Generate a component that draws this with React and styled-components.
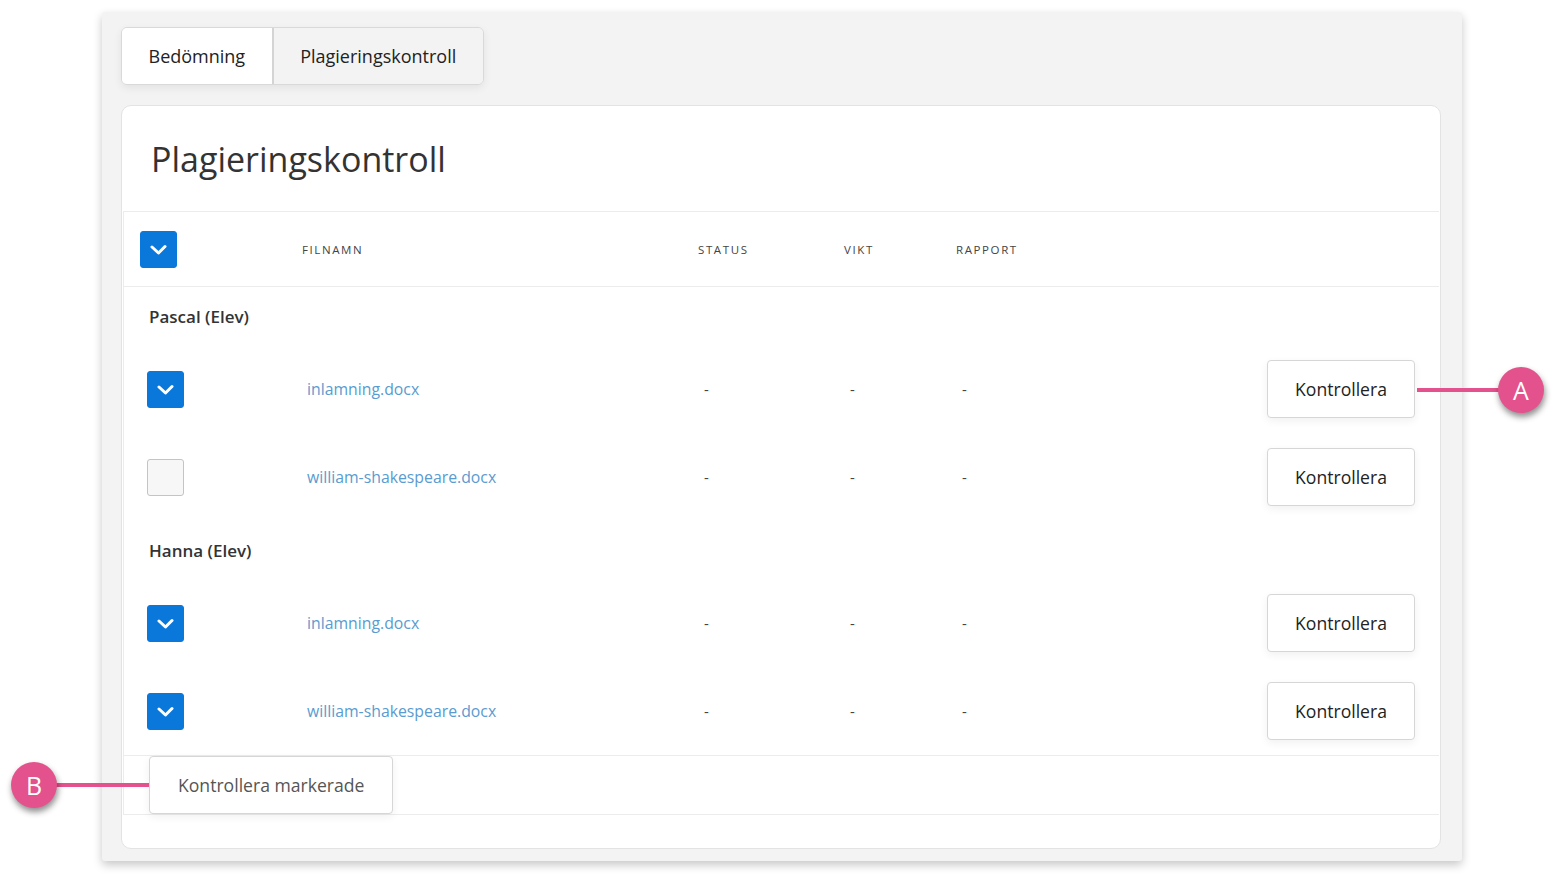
import React from 'react';
import styled, { createGlobalStyle } from 'styled-components';

const GlobalStyle = createGlobalStyle`
  body {
    margin: 0;
    background: #ffffff;
    font-family: 'Open Sans', 'Noto Sans', sans-serif;
    color: #333333;
  }
`;

const Page = styled.div`
  position: relative;
  width: 1555px;
  height: 894px;
  padding: 12px 0 0 102px;
  box-sizing: border-box;
`;

const Frame = styled.div`
  width: 1360px;
  height: 849px;
  box-sizing: border-box;
  background: #f3f3f3;
  border-radius: 3px;
  padding: 15px 21px 0 19px;
  box-shadow: 0 4px 10px rgba(0, 0, 0, 0.22);
`;

const Tabs = styled.div`
  display: inline-flex;
  border: 1px solid #d9d9d9;
  border-radius: 6px;
  overflow: hidden;
  box-shadow: 0 3px 8px rgba(0, 0, 0, 0.07);
`;

const Tab = styled.div`
  height: 56px;
  padding: 0 26.5px;
  display: flex;
  align-items: center;
  font-size: 18px;
  color: #222;
  background: ${p => (p.$active ? '#ffffff' : '#f3f3f3')};
  & + & {
    border-left: 2px solid #d4d4d4;
  }
`;

const Card = styled.div`
  margin-top: 20px;
  background: #ffffff;
  border: 1px solid #e3e3e3;
  border-radius: 10px;
  padding: 0 1px 33px;
`;

const Title = styled.h1`
  margin: 0;
  height: 105px;
  display: flex;
  align-items: center;
  padding-left: 28px;
  font-size: 34px;
  font-weight: 400;
  color: #333;
`;

const Table = styled.div`
  border: 1px solid #ececec;
  border-right: none;
`;

const columns = '162px 396px 146px 112px 1fr 148px';

const HeaderRow = styled.div`
  display: grid;
  grid-template-columns: ${columns};
  align-items: center;
  height: 74px;
  padding: 0 24px 0 16px;
  border-bottom: 1px solid #ececec;
`;

const HeadCell = styled.div`
  font-size: 11.5px;
  letter-spacing: 1.6px;
  color: #444;
  text-transform: uppercase;
`;

const GroupLabel = styled.div`
  height: 58px;
  display: flex;
  align-items: center;
  padding-left: 25px;
  font-size: 17px;
  font-weight: 600;
  color: #333;
`;

const Row = styled.div`
  display: grid;
  grid-template-columns: ${columns};
  align-items: center;
  padding: 15px 24px 15px 23px;
`;

const Box = styled.div`
  width: 37px;
  height: 37px;
  box-sizing: border-box;
  border-radius: 3px;
  display: flex;
  align-items: center;
  justify-content: center;
  background: ${p => (p.$checked ? '#0a78db' : '#f7f7f7')};
  border: 1px solid ${p => (p.$checked ? '#0a78db' : '#c4c4c4')};
`;

const FileLink = styled.a`
  font-size: 15.8px;
  color: #5a9bd0;
  text-decoration: none;
  margin-left: -2px;
`;

const Dash = styled.div`
  font-size: 15px;
  color: #444;
  margin-left: -1px;
`;

const Button = styled.button`
  height: 58px;
  box-sizing: border-box;
  padding: 0 ${p => (p.$muted ? 28 : 0)}px;
  background: #ffffff;
  border: 1px solid #d6d6d6;
  border-radius: 4px;
  font-family: inherit;
  font-size: 17.6px;
  color: ${p => (p.$muted ? '#555' : '#222')};
  box-shadow: 0 3px 8px rgba(0, 0, 0, 0.06);
  white-space: nowrap;
`;

const Footer = styled.div`
  border-top: 1px solid #ececec;
  padding-left: 25px;
  display: flex;
`;

const Callout = styled.div`
  position: absolute;
  top: ${p => p.$y - 23}px;
  left: ${p => p.$x - 23}px;
  width: 46px;
  height: 46px;
  border-radius: 50%;
  background: #e3528c;
  color: #fff;
  font-size: 25px;
  display: flex;
  align-items: center;
  justify-content: center;
  box-shadow: 1px 4px 6px rgba(0, 0, 0, 0.45);
`;

const Leader = styled.div`
  position: absolute;
  top: ${p => p.$y - 2}px;
  left: ${p => p.$x}px;
  width: ${p => p.$w}px;
  height: 4px;
  background: #e3528c;
`;

const Check = () => (
  <svg width="17" height="12" viewBox="0 0 17 12">
    <path d="M2 4l6.5 6 6.5-6.5" fill="none" stroke="#fff" strokeWidth="3" strokeLinecap="round" strokeLinejoin="round" />
  </svg>
);

const CheckBox = ({ checked }) => <Box $checked={checked}>{checked && <Check />}</Box>;

const groups = [
  {
    name: 'Pascal (Elev)',
    files: [
      { name: 'inlamning.docx', checked: true },
      { name: 'william-shakespeare.docx', checked: false },
    ],
  },
  {
    name: 'Hanna (Elev)',
    files: [
      { name: 'inlamning.docx', checked: true },
      { name: 'william-shakespeare.docx', checked: true },
    ],
  },
];

export default function App() {
  return (
    <>
      <GlobalStyle />
      <Page>
        <Frame>
          <Tabs>
            <Tab $active>Bedömning</Tab>
            <Tab>Plagieringskontroll</Tab>
          </Tabs>
          <Card>
            <Title>Plagieringskontroll</Title>
            <Table>
              <HeaderRow>
                <CheckBox checked />
                <HeadCell>Filnamn</HeadCell>
                <HeadCell>Status</HeadCell>
                <HeadCell>Vikt</HeadCell>
                <HeadCell>Rapport</HeadCell>
                <div />
              </HeaderRow>
              {groups.map(g => (
                <React.Fragment key={g.name}>
                  <GroupLabel>{g.name}</GroupLabel>
                  {g.files.map((f, i) => (
                    <Row key={i}>
                      <CheckBox checked={f.checked} />
                      <FileLink href="#">{f.name}</FileLink>
                      <Dash>-</Dash>
                      <Dash>-</Dash>
                      <Dash>-</Dash>
                      <Button>Kontrollera</Button>
                    </Row>
                  ))}
                </React.Fragment>
              ))}
              <Footer>
                <Button $muted>Kontrollera markerade</Button>
              </Footer>
            </Table>
          </Card>
        </Frame>
        <Leader $x={1417} $y={390} $w={85} />
        <Callout $x={1521} $y={390}>A</Callout>
        <Leader $x={52} $y={785} $w={97} />
        <Callout $x={34} $y={785}>B</Callout>
      </Page>
    </>
  );
}
